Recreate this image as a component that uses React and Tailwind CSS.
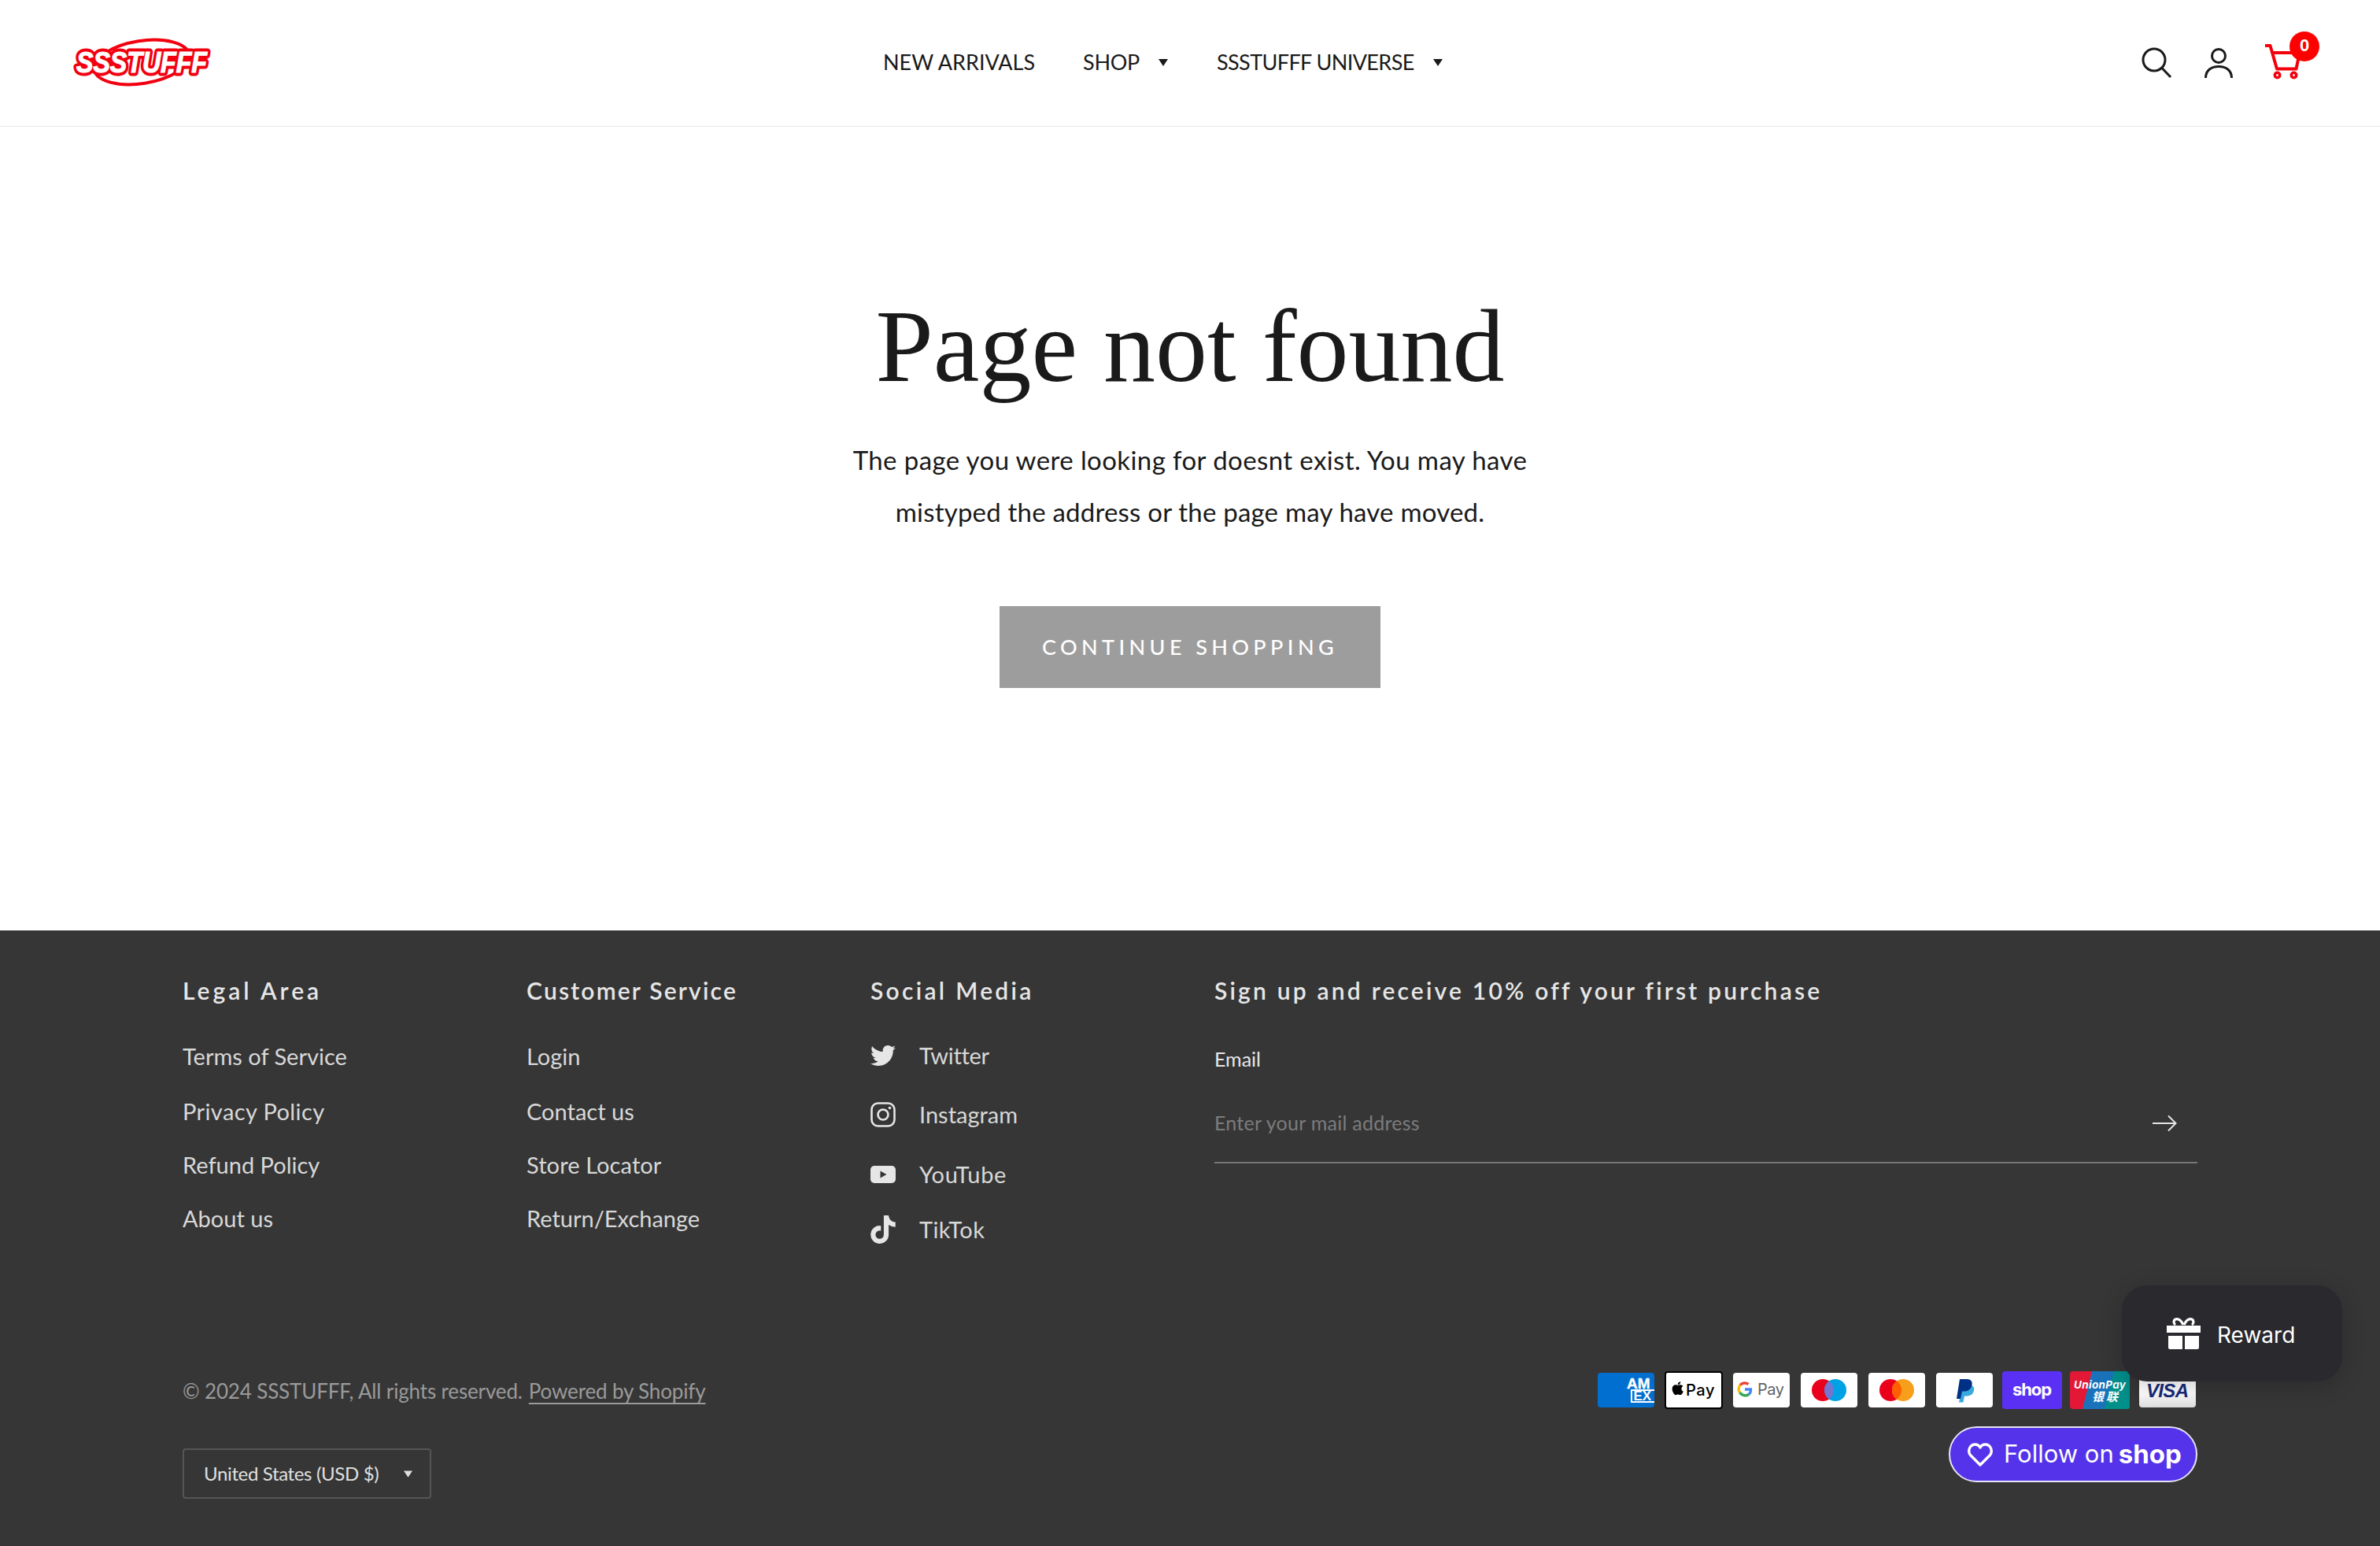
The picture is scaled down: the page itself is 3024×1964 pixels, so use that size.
import React from "react";
import { FaTwitter, FaTiktok } from "react-icons/fa";

const Tri = ({ className }) => (
  <svg viewBox="0 0 12 9" className={className}><path d="M0 0H12L6 9Z" fill="currentColor" /></svg>
);

const logoText = { fontFamily: "'Liberation Sans',sans-serif", fontWeight: 700, fontStyle: "italic", fontSize: 36 };

const Logo = () => (
  <svg viewBox="0 0 176 62" className="w-[176px] h-[62px] block shrink-0 overflow-visible">
    <ellipse cx="88" cy="31" rx="61" ry="27" transform="rotate(-9 88 31)" fill="#fff" stroke="#f2000f" strokeWidth="4" />
    <text x="5" y="44" textLength="166" lengthAdjust="spacingAndGlyphs" style={logoText} fill="#f2000f" stroke="#f2000f" strokeWidth="9" strokeLinejoin="round">SSSTUFFF</text>
    <text x="5" y="44" textLength="166" lengthAdjust="spacingAndGlyphs" style={logoText} fill="#fff" stroke="#fff" strokeWidth="1.2">SSSTUFFF</text>
  </svg>
);

const Search = () => (
  <svg viewBox="0 0 42 42" className="w-[42px] h-[42px] block" fill="none" stroke="#1a1a1a" strokeWidth="3">
    <circle cx="16" cy="16" r="14" /><path d="M26 26.5L37 38" />
  </svg>
);
const User = () => (
  <svg viewBox="0 0 38 42" className="w-[38px] h-[42px] block" fill="none" stroke="#1a1a1a" strokeWidth="3">
    <circle cx="19" cy="11" r="8.5" /><path d="M2.5 39C2.5 29 10 24.5 19 24.5S35.5 29 35.5 39" />
  </svg>
);
const Cart = () => (
  <div className="relative w-[80px] h-[62px]">
    <svg viewBox="0 0 50 46" className="absolute left-[0px] top-[16px] w-[50px] h-[46px]" fill="none" stroke="#f4000c" strokeWidth="4">
      <path d="M1 2H7.5L16 31.5H40.5L44 15" strokeLinejoin="round" />
      <path d="M9.5 11H42" />
      <circle cx="16.5" cy="39.5" r="3.2" strokeWidth="3.6" />
      <circle cx="37.5" cy="39.5" r="3.2" strokeWidth="3.6" />
    </svg>
    <div className="absolute left-[32px] top-[0px] w-[38px] h-[38px] rounded-full bg-[#ff0000] text-white text-[22px] font-bold leading-[36px] text-center [font-family:'Liberation_Sans',sans-serif]">0</div>
  </div>
);

const Card = ({ className, w = "w-[72px]", h = "h-[44px]", children, bg = "bg-white", vb = "0 0 72 44" }) => (
  <div className={`${w} ${h} ${bg} rounded-[4px] overflow-hidden shrink-0 ${className}`}>
    <svg viewBox={vb} className="w-full h-full block">{children}</svg>
  </div>
);

const inter = "'Inter',sans-serif";

const Payments = () => (
  <div className="flex items-center h-[48px] mr-[2px]">
    <Card bg="bg-[#016fd0]" className="">
      <text x="37" y="20" fontFamily="'Liberation Sans',sans-serif" fontWeight="700" fontSize="19" fill="#fff" stroke="#fff" strokeWidth=".4">AM</text>
      <rect x="43" y="22" width="34" height="15" fill="none" stroke="#fff" strokeWidth="2" />
      <text x="45.5" y="35" fontFamily="'Liberation Sans',sans-serif" fontWeight="700" fontSize="17" fill="#fff">EX</text>
    </Card>
    <Card w="w-[74px]" h="h-[48px]" vb="0 0 74 48" className="ml-[13px] border-2 border-black">
      <g transform="translate(7 11) scale(.041)">
        <path d="M318.7 268.7c-.2-36.7 16.4-64.4 50-84.8-18.8-26.9-47.2-41.7-84.7-44.6-35.5-2.8-74.3 20.7-88.5 20.7-15 0-49.4-19.7-76.4-19.7C63.3 141.2 4 184.8 4 273.5q0 39.3 14.4 81.2c12.8 36.7 59 126.7 107.2 125.2 25.2-.6 43-17.9 75.8-17.9 31.8 0 48.3 17.9 76.4 17.9 48.6-.7 90.4-82.5 102.6-119.3-65.2-30.7-61.7-90-61.7-91.9zm-56.6-164.2c27.3-32.4 24.8-61.9 24-72.5-24.1 1.4-52 16.4-67.9 34.9-17.5 19.8-27.8 44.3-25.6 71.9 26.1 2 49.9-11.4 69.5-34.3z" fill="#000" />
      </g>
      <text x="26" y="32" fontFamily={inter} fontWeight="500" fontSize="22" fill="#000" textLength="40">Pay</text>
    </Card>
    <Card className="ml-[13px]">
      <g fill="none" strokeWidth="3.4">
        <path d="M19.5 14.5A8 8 0 0 0 9 15.5" stroke="#ea4335" />
        <path d="M9 15.5A8.5 8.5 0 0 0 8.5 25" stroke="#fbbc04" />
        <path d="M8.5 25A8.5 8.5 0 0 0 20 27.5" stroke="#34a853" />
        <path d="M20 27.5A8 8 0 0 0 22.5 21H15" stroke="#4285f4" />
      </g>
      <text x="31" y="28" fontFamily={inter} fontSize="20" fill="#5f6368" textLength="34">Pay</text>
    </Card>
    <Card className="ml-[14px]">
      <circle cx="28" cy="22" r="14" fill="#eb001b" />
      <circle cx="44" cy="22" r="14" fill="#00a2e5" />
      <path d="M36 10.5A14 14 0 0 1 36 33.5A14 14 0 0 1 36 10.5Z" fill="#7375cf" />
    </Card>
    <Card className="ml-[14px]">
      <circle cx="28" cy="22" r="14" fill="#eb001b" />
      <circle cx="44" cy="22" r="14" fill="#f79e1b" />
      <path d="M36 10.5A14 14 0 0 1 36 33.5A14 14 0 0 1 36 10.5Z" fill="#ff5f00" />
    </Card>
    <Card className="ml-[14px]">
      <path d="M32 13H40C45 13 47 16 46 20C45 25 41 27 37 27H34L32.5 35H27Z" fill="#169bd7" opacity=".85" transform="translate(2 2.5)" />
      <path d="M30 8H39C44 8 46.5 11 45.5 15.5C44.5 21 40 23.5 36 23.5H33L31 33H26Z" fill="#002f86" />
    </Card>
    <Card w="w-[76px]" h="h-[48px]" vb="0 0 76 48" bg="bg-[#5a31f4]" className="ml-[12px]">
      <text x="38" y="31" textAnchor="middle" fontFamily={inter} fontWeight="700" fontSize="22" fill="#fff" textLength="50">shop</text>
    </Card>
    <Card w="w-[76px]" h="h-[48px]" vb="0 0 76 48" bg="bg-[#e21836]" className="ml-[10px]">
      <path d="M28 0H76V48H16Z" fill="#1a73ba" />
      <path d="M56 0H76V48H44Z" fill="#00908c" />
      <text x="5" y="22" fontFamily={inter} fontWeight="700" fontStyle="italic" fontSize="13.5" fill="#fff" textLength="66">UnionPay</text>
      <text x="28" y="38" fontFamily="'Noto Sans CJK SC',sans-serif" fontWeight="700" fontStyle="italic" fontSize="15" fill="#fff" textLength="33">银联</text>
    </Card>
    <Card className="ml-[12px] [background:linear-gradient(#fff_60%,#dcdcdc)]" bg="">
      <text x="36" y="31" textAnchor="middle" fontFamily="'Liberation Sans',sans-serif" fontWeight="700" fontStyle="italic" fontSize="24" fill="#172a78" textLength="54">VISA</text>
    </Card>
  </div>
);

const H = ({ className = "", children }) => (
  <h3 className={`text-[30px] leading-[40px] font-semibold text-[#e6e6e6] ${className}`}>{children}</h3>
);

const Col = ({ title, items, tracking }) => (
  <div>
    <H className={tracking}>{title}</H>
    <ul className="mt-[44px] flex flex-col gap-[28px]">
      {items.map(([t, c]) => (
        <li key={t} className={`text-[29px] leading-[40px] text-[#d8d8d8] first:mb-[2px] ${c}`}>{t}</li>
      ))}
    </ul>
  </div>
);

export default function App() {
  return (
    <div className="relative w-full min-h-[1964px] bg-white [font-family:Lato,sans-serif] overflow-hidden">
      <header className="h-[161px] border-b border-[#e8e8e8] flex items-center pl-[92px] pb-[2px]">
        <Logo />
        <nav className="ml-[854px] flex items-center text-[27px] leading-[40px] text-[#1a1a1a]">
          <span className="tracking-[0px]">NEW ARRIVALS</span>
          <span className="ml-[61px] tracking-[-0.3px]">SHOP</span>
          <Tri className="w-[12px] h-[9px] ml-[24px]" />
          <span className="ml-[62px] tracking-[-0.6px]">SSSTUFFF UNIVERSE</span>
          <Tri className="w-[12px] h-[9px] ml-[24px]" />
        </nav>
        <div className="ml-auto flex items-center mr-[67px] mt-[4px]">
          <Search />
          <div className="ml-[37px]"><User /></div>
          <div className="ml-[39px] -mt-[20px]"><Cart /></div>
        </div>
      </header>

      <main className="h-[1021px] flex flex-col items-center pt-[199px]">
        <h1 className="h-[160px] text-[132px] leading-[160px] text-[#1a1a1a] [font-family:'Liberation_Serif',serif]">Page not found</h1>
        <p className="mt-[31px] text-[33px] leading-[66px] text-center text-[#1a1a1a] tracking-[0.2px]">
          <span className="tracking-[0.4px]">The page you were looking for doesnt exist. You may have</span><br />mistyped the address or the page may have moved.
        </p>
        <a className="mt-[87px] w-[484px] h-[104px] bg-[#9d9d9d] flex items-center justify-center text-white text-[27px] font-medium tracking-[5.4px]">CONTINUE SHOPPING</a>
      </main>

      <footer className="h-[782px] bg-[#363636] px-[232px] pt-[56px]">
        <div className="h-[504px] grid grid-cols-[437px_437px_437px_1fr]">
          <Col title="Legal Area" tracking="tracking-[4px]" items={[["Terms of Service", ""], ["Privacy Policy", "tracking-[0.4px]"], ["Refund Policy", ""], ["About us", ""]]} />
          <Col title="Customer Service" tracking="tracking-[2.2px]" items={[["Login", ""], ["Contact us", ""], ["Store Locator", "tracking-[0.1px]"], ["Return/Exchange", ""]]} />
          <div>
            <H className="tracking-[3.3px]">Social Media</H>
            <ul className="text-[29px] leading-[40px] text-[#d8d8d8]">
              <li className="mt-[43px] flex items-center h-[40px]">
                <FaTwitter className="w-[32px] h-[32px] text-[#e6e6e6]" />
                <span className="ml-[30px] tracking-[-0.3px]">Twitter</span>
              </li>
              <li className="mt-[35px] flex items-center h-[40px]">
                <svg viewBox="0 0 32 32" className="w-[32px] h-[32px]" fill="none" stroke="#e6e6e6" strokeWidth="2.6">
                  <rect x="1.5" y="1.5" width="29" height="29" rx="8" /><circle cx="16" cy="16" r="6.5" /><circle cx="24.5" cy="7.5" r="1.8" fill="#e6e6e6" stroke="none" />
                </svg>
                <span className="ml-[30px]">Instagram</span>
              </li>
              <li className="mt-[36px] flex items-center h-[40px]">
                <svg viewBox="0 0 32 22" className="w-[32px] h-[22px]">
                  <rect width="32" height="22" rx="5" fill="#e6e6e6" /><path d="M12.5 6.5L20.5 11L12.5 15.5Z" fill="#363636" />
                </svg>
                <span className="ml-[30px] tracking-[0.7px]">YouTube</span>
              </li>
              <li className="mt-[30px] flex items-center h-[40px]">
                <FaTiktok className="w-[32px] h-[36px] text-[#e6e6e6]" />
                <span className="ml-[30px] tracking-[0.4px]">TikTok</span>
              </li>
            </ul>
          </div>
          <div>
            <H className="tracking-[3.2px]">Sign up and receive 10% off your first purchase</H>
            <label className="block mt-[47px] text-[25px] leading-[40px] text-[#e6e6e6]">Email</label>
            <div className="mt-[13px] h-[100px] border-b-2 border-[#777777] flex items-center pr-[26px]">
              <input readOnly placeholder="Enter your mail address" className="flex-1 bg-transparent outline-none text-[25px] tracking-[0.25px] placeholder:text-[#7c7c7c]" />
              <svg viewBox="0 0 32 22" className="w-[32px] h-[22px]" fill="none" stroke="#e6e6e6" strokeWidth="2">
                <path d="M1 11H30M21 1.5L30.5 11L21 20.5" />
              </svg>
            </div>
          </div>
        </div>

        <div className="flex justify-between items-start">
          <div>
            <div className="h-[50px] flex items-center text-[26px] text-[#9a9a9a] tracking-[-0.15px]">
              <span>© 2024 SSSTUFFF, All rights reserved.</span>
              <span className="ml-[8px] underline underline-offset-[5px]">Powered by Shopify</span>
            </div>
            <div className="mt-[48px] w-[316px] h-[64px] border-2 border-[#555555] rounded-[4px] flex items-center pl-[25px] text-[24px] text-[#e0e0e0] tracking-[-0.35px]">
              <span>United States (USD $)</span>
              <Tri className="w-[11px] h-[9px] ml-auto mr-[22px]" />
            </div>
          </div>
          <div className="flex flex-col items-end">
            <Payments />
            <div className="mt-[22px] w-[316px] h-[71px] rounded-full bg-[#5433eb] border-2 border-[#e6e3f5] flex items-center pl-[22px] text-white [font-family:Inter,sans-serif]">
              <svg viewBox="0 0 32 30" className="w-[32px] h-[30px]" fill="none" stroke="#fff" strokeWidth="3.4" strokeLinejoin="round">
                <path d="M16 28L3.5 15.5C-0.5 10 3 2 9.5 2C12.5 2 14.8 3.6 16 6C17.2 3.6 19.5 2 22.5 2C29 2 32.5 10 28.5 15.5Z" />
              </svg>
              <span className="ml-[14px] text-[31px]">Follow on</span>
              <span className="ml-[6px] text-[33px] font-bold">shop</span>
            </div>
          </div>
        </div>
      </footer>

      <div className="absolute right-[48px] bottom-[209px] w-[280px] h-[122px] rounded-[32px] bg-[#29292e] shadow-[0_6px_30px_rgba(0,0,0,0.2)] flex items-center pl-[57px] text-white [font-family:Inter,sans-serif]">
        <svg viewBox="0 0 43 40" className="w-[43px] h-[40px]" fill="#fff">
          <path d="M0 10H43V19H0Z" /><path d="M2 23H20V40H4Q2 40 2 38Z" /><path d="M23 23H41V38Q41 40 39 40H23Z" />
          <g fill="none" stroke="#fff" strokeWidth="3.2">
            <path d="M21 9C18 3 15 1.5 12.5 1.7C8.5 2 8 7 11 9" />
            <path d="M22 9C25 3 28 1.5 30.5 1.7C34.5 2 35 7 32 9" />
          </g>
        </svg>
        <span className="ml-[21px] mt-[3px] text-[28px]">Reward</span>
      </div>
    </div>
  );
}
